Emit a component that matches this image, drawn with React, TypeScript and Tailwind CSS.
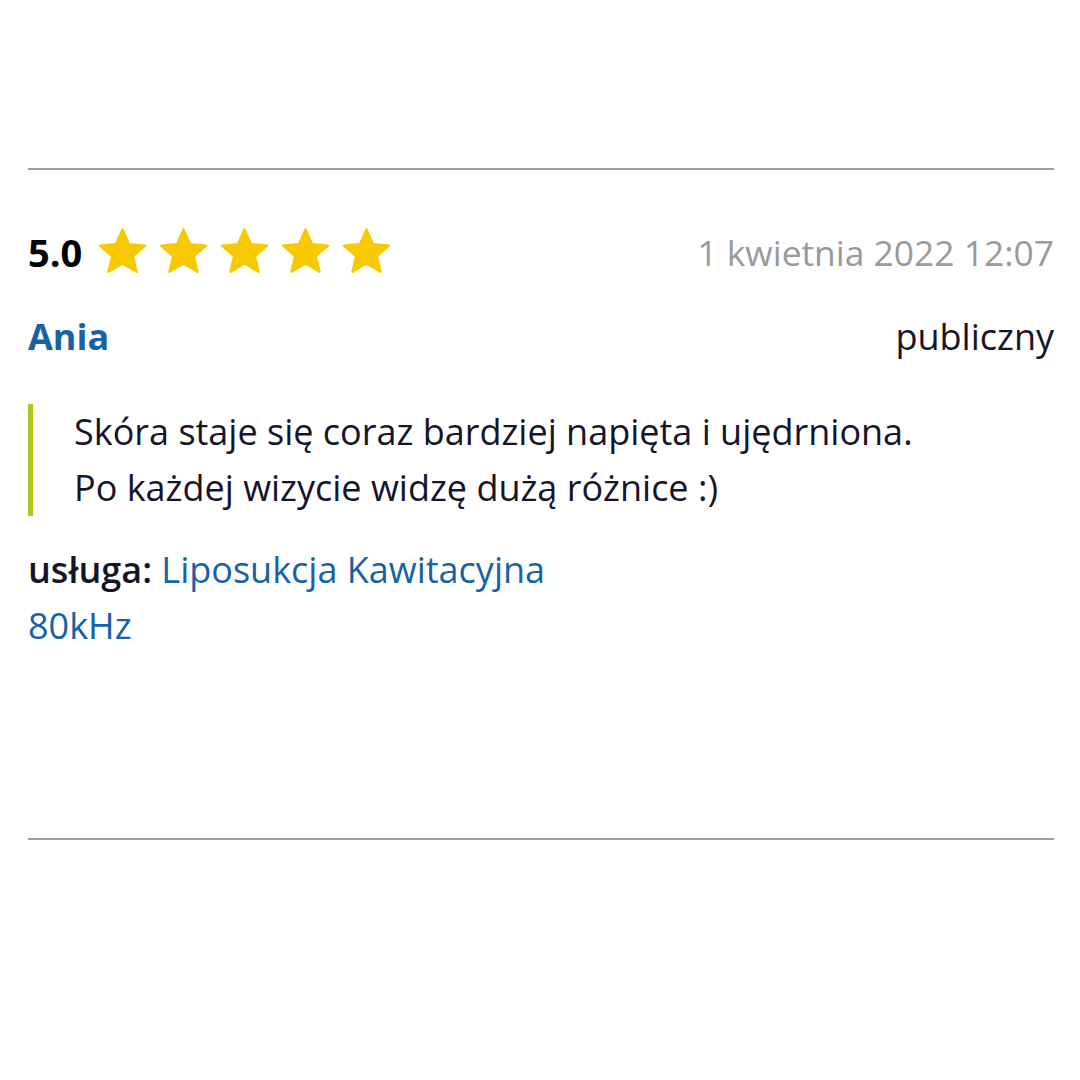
function Star() {
  return (
    <svg viewBox="0 0 24 24" className="w-[53px] h-[51px]" fill="#f6c900">
      <path
        d="M12 1.2 15.1 8.1 22.6 8.8 16.9 13.7 18.6 21.1 12 17.2 5.4 21.1 7.1 13.7 1.4 8.8 8.9 8.1Z"
        stroke="#f6c900"
        strokeWidth="1.1"
        strokeLinejoin="round"
      />
    </svg>
  )
}

export default function App() {
  return (
    <div
      className="h-screen overflow-hidden bg-white pl-[28px] pr-[26px] pt-[168px] text-[36px] leading-[56px] text-[#15152a]"
      style={{ fontFamily: '"Open Sans", "Noto Sans", sans-serif' }}
    >
      <div className="border-t-2 border-b-2 border-[#9e9e9e] pt-[54px] pb-[184px]">
        {/* rating + date */}
        <div className="flex items-center justify-between h-[56px]">
          <div className="flex items-center">
            <span className="font-bold text-black text-[38px] mr-[14px]">5.0</span>
            <div className="flex gap-[8px]">
              <Star />
              <Star />
              <Star />
              <Star />
              <Star />
            </div>
          </div>
          <span className="text-[#9a9a9a] text-[35.4px]">1 kwietnia 2022 12:07</span>
        </div>

        {/* author */}
        <div className="flex items-center justify-between mt-[29px]">
          <span className="font-bold text-[#1762a7]">Ania</span>
          <span>publiczny</span>
        </div>

        {/* review text */}
        <blockquote className="mt-[39px] border-l-[5px] border-[#afc51b] pl-[41px]">
          <p>Skóra staje się coraz bardziej napięta i ujędrniona.</p>
          <p>Po każdej wizycie widzę dużą różnice :)</p>
        </blockquote>

        {/* service */}
        <p className="mt-[26px] w-[580px]">
          <span className="font-semibold">usługa:</span>{' '}
          <a href="#" className="text-[#1762a7]">
            Liposukcja Kawitacyjna 80kHz
          </a>
        </p>
      </div>
    </div>
  )
}
